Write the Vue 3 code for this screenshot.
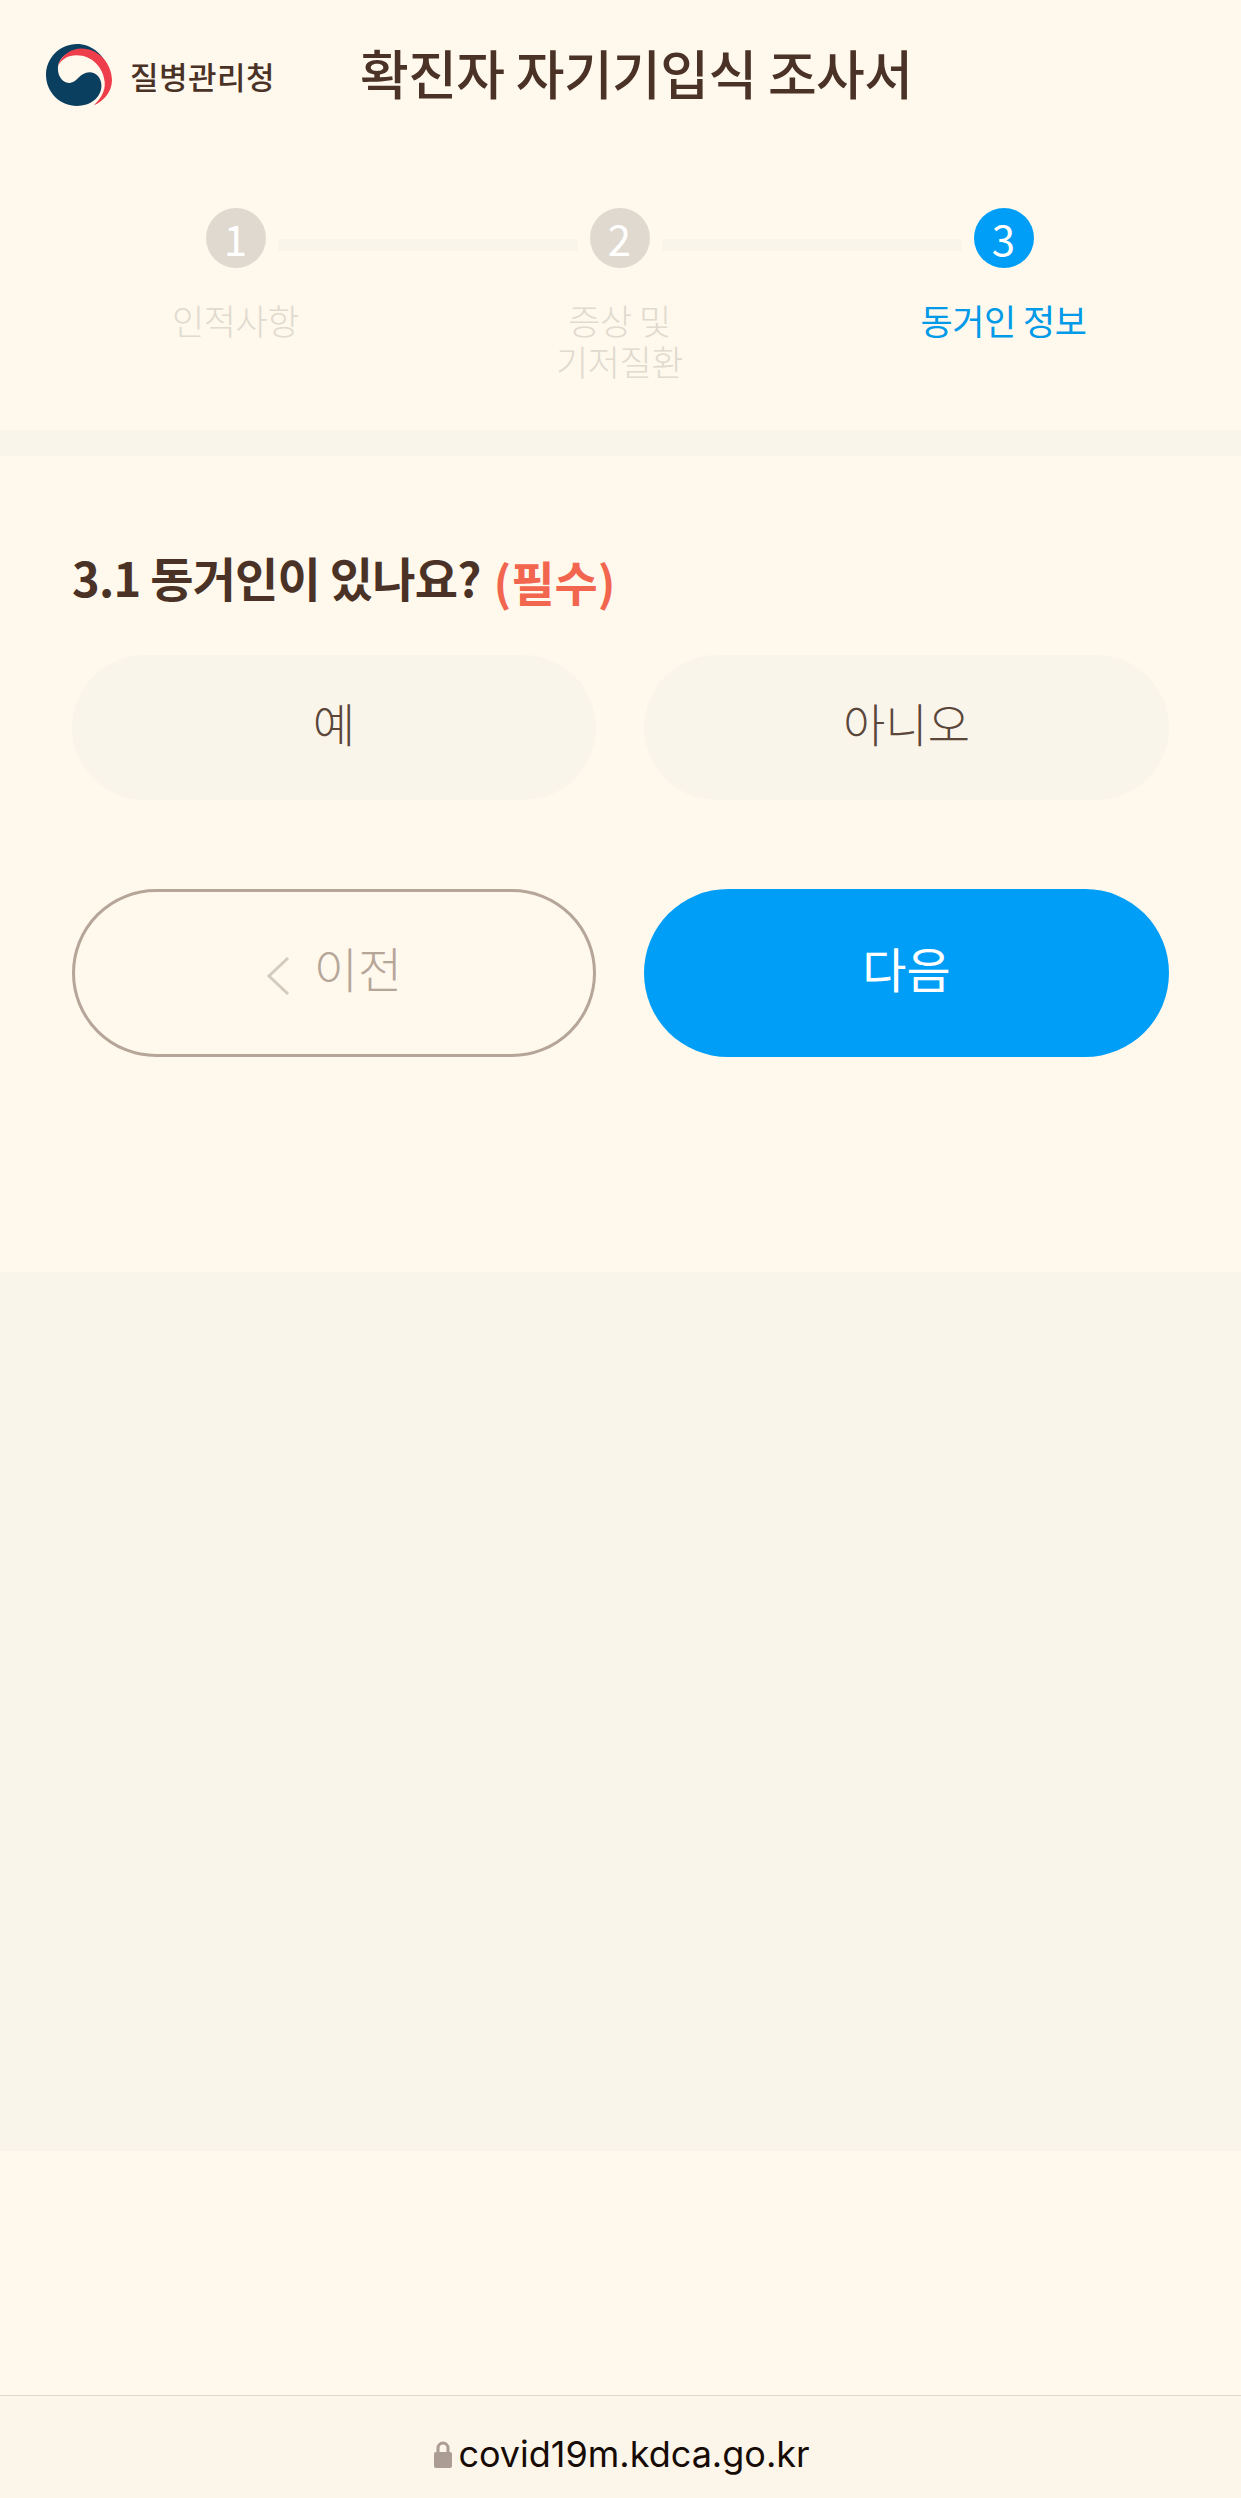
<script setup>
const steps = [
  { id: 1, label: ['인적사항'] },
  { id: 2, label: ['증상 및', '기저질환'] },
  { id: 3, label: ['동거인 정보'] }
]
const current = 3
</script>

<template>
  <div class="page">
    <header class="head">
      <div class="logo">
        <svg class="logo-mark" viewBox="48 62 200 188" aria-hidden="true">
          <path fill="#0b3f60" d="M48 156C48 104 90 62 142 62C185 62 222 92 236 135C215 105 180 85 140 85C105 85 84 112 84 136C84 162 100 180 120 180C142 180 150 148 180 148C200 148 216 165 216 188C216 225 182 250 142 250C90 250 48 208 48 156Z" />
          <path fill="#ee3e4b" d="M84 128C95 95 125 76 155 76C210 76 248 125 248 172C248 205 225 235 193 248C214 228 228 205 226 178C222 135 190 96 140 96C115 96 96 108 84 128Z" />
        </svg>
        <span class="logo-text">질병관리청</span>
      </div>
      <h1 class="title">확진자 자기기입식 조사서</h1>
    </header>

    <section class="stepper">
      <div class="rail">
        <template v-for="(step, i) in steps" :key="step.id">
          <span :class="['dot', { on: step.id === current }]">{{ step.id }}</span>
          <span v-if="i < steps.length - 1" class="link"></span>
        </template>
      </div>
      <div class="labels">
        <div v-for="step in steps" :key="step.id" :class="['label', { on: step.id === current }]">
          <div v-for="line in step.label" :key="line">{{ line }}</div>
        </div>
      </div>
    </section>

    <div class="band"></div>

    <main class="form">
      <h2 class="question">3.1 동거인이 있나요? <span class="req">(필수)</span></h2>
      <div class="choices">
        <button class="choice"><span>예</span></button>
        <button class="choice"><span>아니오</span></button>
      </div>
      <div class="actions">
        <button class="prev">
          <svg class="chev" viewBox="0 0 24 40" aria-hidden="true">
            <path d="M22 2 3 20l19 18" fill="none" stroke="#d4cabd" stroke-width="3" />
          </svg>
          <span>이전</span>
        </button>
        <button class="next"><span>다음</span></button>
      </div>
    </main>

    <div class="filler"></div>
    <div class="spacer"></div>

    <footer class="url">
      <svg class="lock" viewBox="0 0 18 27" aria-hidden="true">
        <path fill="#ab9c94" d="M2 11h14a2 2 0 0 1 2 2v12a2 2 0 0 1-2 2H2a2 2 0 0 1-2-2V13a2 2 0 0 1 2-2Z" />
        <path fill="none" stroke="#ab9c94" stroke-width="3" d="M4 12V7a5 5 0 0 1 10 0v5" />
      </svg>
      <span>covid19m.kdca.go.kr</span>
    </footer>
  </div>
</template>

<style>
body {
  background: #fff8ec;
}
</style>

<style scoped>
.page {
  display: flex;
  flex-direction: column;
  height: 2498px;
  background: #fff8ec;
  color: #4a3226;
  font-family: "Noto Sans CJK KR", "Noto Sans", sans-serif;
  overflow: hidden;
}
.head {
  display: flex;
  align-items: center;
  height: 150px;
  padding-left: 46px;
  flex: none;
}
.logo {
  display: flex;
  align-items: center;
  width: 314px;
}
.logo-mark {
  width: 66px;
  height: 62px;
  flex: none;
}
.logo-text {
  margin-left: 18px;
  font-size: 31px;
  font-weight: 500;
  letter-spacing: 0.5px;
  color: #4a3226;
}
.title {
  margin: 0 0 5px;
  font-size: 53px;
  font-weight: 500;
  line-height: 1;
  letter-spacing: -0.6px;
  color: #4a3226;
}
.stepper {
  flex: none;
  height: 280px;
  padding-top: 58px;
  box-sizing: border-box;
}
.rail {
  display: flex;
  justify-content: center;
  align-items: flex-start;
  gap: 12px;
  padding-right: 2px;
}
.dot {
  width: 60px;
  height: 60px;
  border-radius: 50%;
  background: #dfd9cf;
  color: #fff;
  font-size: 42px;
  font-weight: 400;
  line-height: 60px;
  text-align: center;
  flex: none;
}
.dot.on {
  background: #009ef7;
}
.link {
  width: 300px;
  height: 12px;
  margin-top: 31px;
  background: #faf5ea;
}
.labels {
  display: grid;
  grid-template-columns: repeat(3, 384px);
  justify-content: center;
  margin-top: 31px;
  padding-right: 2px;
}
.label {
  font-size: 35px;
  font-weight: 300;
  line-height: 41px;
  letter-spacing: -0.5px;
  text-align: center;
  color: #e0dacf;
}
.label.on {
  color: #009ae8;
  font-weight: 400;
}
.band {
  flex: none;
  height: 26px;
  background: #faf5ea;
}
.form {
  flex: none;
  height: 816px;
  box-sizing: border-box;
  padding: 88px 72px 0;
}
.question {
  height: 66px;
  margin: 0;
  font-size: 47px;
  font-weight: 700;
  line-height: 66px;
  letter-spacing: -0.8px;
  color: #4a3226;
}
.req {
  margin-left: 3px;
  font-size: 47px;
  font-weight: 700;
  letter-spacing: 0;
  vertical-align: -4px;
  color: #f2654e;
}
.choices,
.actions {
  display: grid;
  grid-template-columns: 524px 525px;
  gap: 48px;
}
.choices {
  margin-top: 45px;
}
button {
  font-family: inherit;
  padding: 0;
  border: 0;
}
button span {
  display: block;
  margin-bottom: 12px;
}
.choice {
  height: 145px;
  border-radius: 73px;
  background: #faf5ea;
  color: #5b463a;
  font-size: 46px;
  font-weight: 300;
}
.actions {
  margin-top: 89px;
}
.prev,
.next {
  height: 168px;
  border-radius: 84px;
  font-size: 48px;
  font-weight: 300;
}
.prev {
  display: flex;
  align-items: center;
  justify-content: center;
  gap: 24px;
  box-sizing: border-box;
  border: 3px solid #b5a699;
  background: #fff8ec;
  color: #b5a699;
}
.chev {
  width: 24px;
  height: 40px;
  margin-top: 6px;
}
.next {
  background: #009ef7;
  color: #fff;
  font-weight: 400;
}
.filler {
  flex: none;
  height: 879px;
  background: #faf5ea;
}
.spacer {
  flex: 1;
}
.url {
  flex: none;
  height: 103px;
  display: flex;
  align-items: center;
  justify-content: center;
  gap: 6px;
  box-sizing: border-box;
  padding: 14px 0 0 3px;
  border-top: 1px solid #e0d8cc;
  background: #fbf5ea;
  color: #170b06;
  font-family: Inter, "Noto Sans", sans-serif;
  font-size: 36px;
}
.lock {
  width: 18px;
  height: 27px;
}
</style>
